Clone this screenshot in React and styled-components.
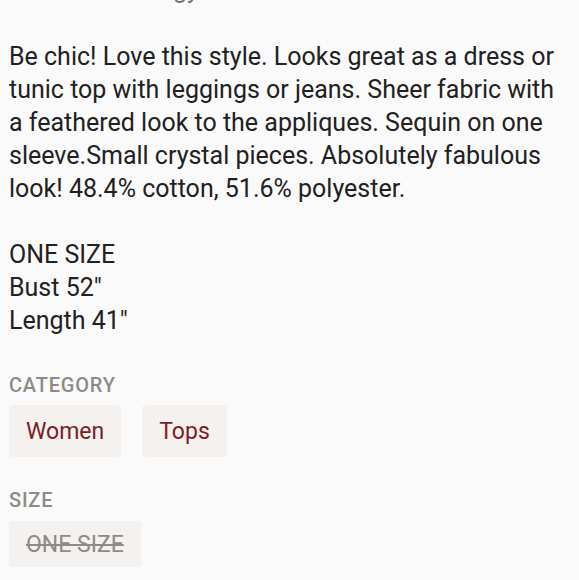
import React from 'react';
import styled, { createGlobalStyle } from 'styled-components';

const GlobalStyle = createGlobalStyle`
  html, body {
    margin: 0;
    padding: 0;
    background: #fafafa;
  }
  body {
    font-family: Roboto, "Noto Sans", sans-serif;
    color: #212121;
  }
`;

const Page = styled.div`
  padding: 0 9px;
  overflow: hidden;
`;

const CutLine = styled.div`
  height: 3px;
  overflow: hidden;
  font-size: 25px;
  line-height: 33px;
  color: #777;
  padding-left: 164px;
  & span {
    display: block;
    margin-top: -27px;
  }
`;

const Description = styled.p`
  margin: 37px 0 0;
  font-size: 25px;
  line-height: 33px;
`;

const Measures = styled.p`
  margin: 33px 0 0;
  font-size: 25px;
  line-height: 33px;
`;

const SectionLabel = styled.h4`
  margin: ${(p) => p.$top}px 0 0;
  font-size: 20px;
  line-height: 24px;
  font-weight: 500;
  letter-spacing: 0.8px;
  text-transform: uppercase;
  color: #8f8a86;
`;

const ChipRow = styled.div`
  display: flex;
  gap: 21px;
  margin-top: ${(p) => p.$top}px;
`;

const Chip = styled.a`
  display: inline-flex;
  align-items: center;
  height: ${(p) => (p.$muted ? 46 : 52)}px;
  padding: 0 17px;
  border-radius: 4px;
  background: #f4f1ee;
  font-size: 23px;
  color: ${(p) => (p.$muted ? '#8f8a86' : '#7b1c2b')};
  text-decoration: ${(p) => (p.$muted ? 'line-through' : 'none')};
`;

export default function App() {
  return (
    <>
      <GlobalStyle />
      <Page>
        <CutLine><span>gy</span></CutLine>
        <Description>
          Be chic! Love this style. Looks great as a dress or tunic top with leggings or jeans.
          Sheer fabric with a feathered look to the appliques. Sequin on one sleeve.Small crystal
          pieces. Absolutely fabulous look! 48.4% cotton, 51.6% polyester.
        </Description>
        <Measures>
          ONE SIZE<br />
          Bust 52"<br />
          Length 41"
        </Measures>
        <SectionLabel $top={36}>Category</SectionLabel>
        <ChipRow $top={8}>
          <Chip>Women</Chip>
          <Chip>Tops</Chip>
        </ChipRow>
        <SectionLabel $top={31}>Size</SectionLabel>
        <ChipRow $top={9}>
          <Chip $muted>ONE SIZE</Chip>
        </ChipRow>
      </Page>
    </>
  );
}
